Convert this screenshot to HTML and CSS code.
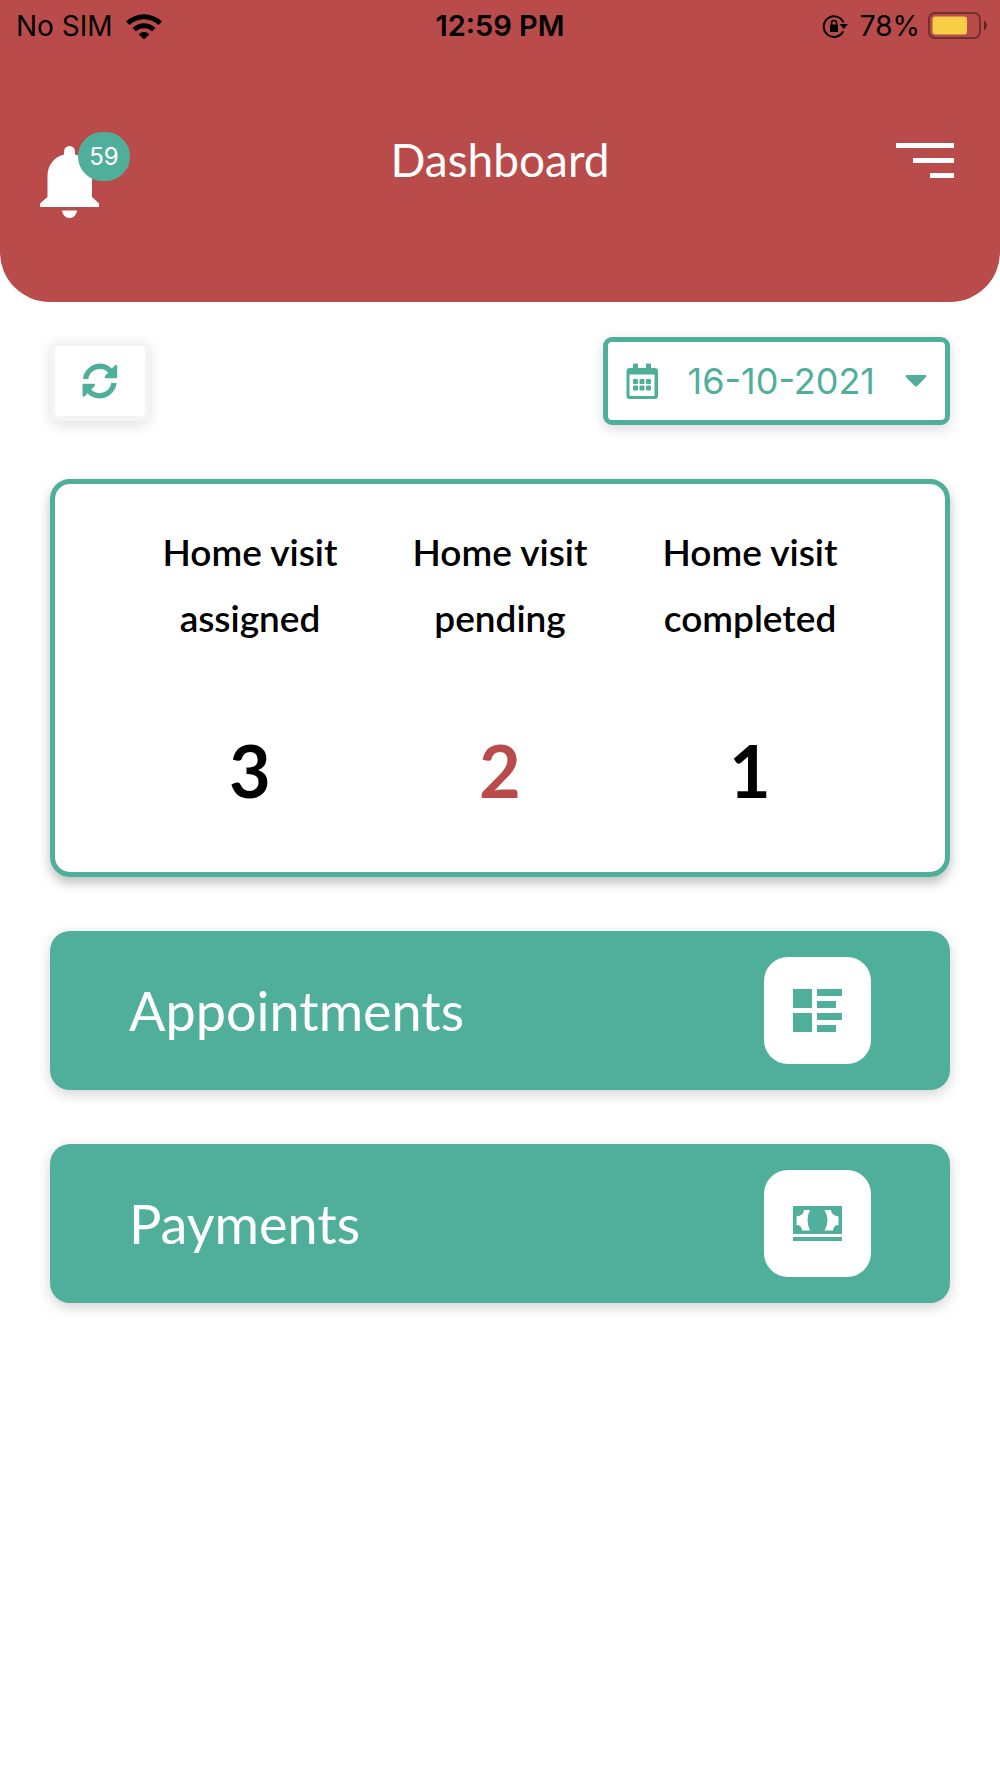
FILE: index.html
```html
<!DOCTYPE html>
<html lang="en">
<head>
  <meta charset="UTF-8">
  <meta name="viewport" content="width=device-width, initial-scale=1">
  <title>Dashboard</title>
  <link rel="stylesheet" href="styles.css">
</head>
<body>
  <header class="header">
    <div class="status">
      <div class="status-left">
        <span>No SIM</span>
        <svg class="wifi" viewBox="0 0 38 28" width="38" height="28">
          <path d="M1 9.500A26 26 0 0 1 37 9.500L33.500 13A21 21 0 0 0 4.500 13Z"/>
          <path d="M7.500 16A16.500 16.500 0 0 1 30.500 16L27 19.500A11.500 11.500 0 0 0 11 19.500Z"/>
          <path d="M13.500 22.200A8 8 0 0 1 24.500 22.200L19 27.500Z"/>
        </svg>
      </div>
      <span class="time">12:59 PM</span>
      <div class="status-right">
        <svg class="lock" viewBox="0 0 26 24" width="26" height="24">
          <path d="M21.200 17.300A10.300 10.300 0 1 1 21.500 8.500" fill="none" stroke="#000" stroke-width="2"/>
          <path d="M17.500 10h8.500l-4.200 5z"/>
          <rect x="8" y="10.500" width="8" height="7.500" rx="1"/>
          <path d="M9.500 11.500V9a2.500 2.500 0 0 1 5 0v2.500" fill="none" stroke="#000" stroke-width="1.500"/>
        </svg>
        <span>78%</span>
        <svg class="battery" viewBox="0 0 60 28" width="60" height="28">
          <rect x="1" y="1" width="51" height="25" rx="6" fill="none" stroke="#742f2f" stroke-width="2"/>
          <rect x="4.500" y="4.500" width="34.500" height="18" rx="3" fill="#f8ce46"/>
          <path d="M56 8.500q6 5 0 10z" fill="#5c2525"/>
        </svg>
      </div>
    </div>
    <nav class="nav">
      <button class="bell" aria-label="Notifications">
        <svg viewBox="0 0 60 74" width="60" height="74" fill="#fff">
          <path d="M29.500 0a5.500 5.500 0 0 1 5.500 5.500V8.500C46 11 52 20 52 30V51L59 57.500V61H0V57.500L7.500 51V30C7.500 20 13.500 11 24 8.500V5.500A5.500 5.500 0 0 1 29.500 0Z"/>
          <path d="M22 64.500H37A7.500 7.500 0 0 1 22 64.500Z"/>
        </svg>
        <span class="badge">59</span>
      </button>
      <h1>Dashboard</h1>
      <button class="menu" aria-label="Menu">
        <span></span>
        <span></span>
        <span></span>
      </button>
    </nav>
  </header>

  <main class="content">
    <div class="toolbar">
      <button class="refresh" aria-label="Refresh">
        <svg viewBox="0 0 36 36" width="36" height="36">
          <path d="M3.500 16A14.500 14.500 0 0 1 29 8.500" fill="none" stroke="#50af9b" stroke-width="5.500"/>
          <path d="M33 2.200Q35 1.500 35.200 3.500V14Q35.200 15.200 34 15.200H23.500Q22 14.500 23 13Z"/>
          <path d="M32 20A14.500 14.500 0 0 1 6.500 27.500" fill="none" stroke="#50af9b" stroke-width="5.500"/>
          <path d="M2.500 33.500Q.8 34 .5 32.500V22Q.5 20.800 1.500 20.800H12.500Q13.800 21.500 12.700 23Z"/>
        </svg>
      </button>
      <button class="date">
        <svg viewBox="0 0 32 36" width="32" height="36">
          <path fill-rule="evenodd" d="M7 5V1.500Q7 .5 8 .5h3q1 0 1 1V5h8V1.500q0-1 1-1h3q1 0 1 1V5h4q3 0 3 3v25q0 3-3 3H3.500q-3 0-3-3V8q0-3 3-3ZM3.500 11.500V32q0 1 1 1h23q1 0 1-1V11.500Z"/>
          <rect x="7" y="16" width="5" height="5" rx="1"/>
          <rect x="13.500" y="16" width="5" height="5" rx="1"/>
          <rect x="20" y="16" width="5" height="5" rx="1"/>
          <rect x="7" y="22.500" width="5" height="5" rx="1"/>
          <rect x="13.500" y="22.500" width="5" height="5" rx="1"/>
          <rect x="20" y="22.500" width="5" height="5" rx="1"/>
        </svg>
        <span>16-10-2021</span>
        <svg viewBox="0 0 22 12" width="22" height="12">
          <path d="M1.500 0h19q1.500.5.500 2L12 11.200q-1 .8-2 0L.8 2Q0 .5 1.500 0Z"/>
        </svg>
      </button>
    </div>

    <section class="stats">
      <div class="stat">
        <h2>Home visit<br>assigned</h2>
        <p>3</p>
      </div>
      <div class="stat pending">
        <h2>Home visit<br>pending</h2>
        <p>2</p>
      </div>
      <div class="stat">
        <h2>Home visit<br>completed</h2>
        <p>1</p>
      </div>
    </section>

    <a class="link" href="#appointments">
      <span>Appointments</span>
      <span class="tile">
        <svg viewBox="0 0 49 43" width="49" height="43">
          <path d="M0 0h19v19H0zM24 0h25v7H24zM24 12h19v7H24zM0 24h19v19H0zM24 24h25v7H24zM24 36h19v7H24z"/>
        </svg>
      </span>
    </a>
    <a class="link" href="#payments">
      <span>Payments</span>
      <span class="tile">
        <svg viewBox="0 0 49 35" width="49" height="35">
          <path d="M0 0h49v28H0zM0 31h49v4H0z"/>
          <path fill="#fff" d="M11 4h6q-5 10 0 20.500H9q0-3-2-4.500-1.500-1-3.500-1V10.500Q7 10 8.500 8.500 11 7 11 4ZM38 4h-6.500q6 10 0 20.500H40q0-3 2-4.500 1.500-1 3.500-1V10.500Q42 10 40.500 8.500 38 7 38 4Z"/>
        </svg>
      </span>
    </a>
  </main>
</body>
</html>
```
FILE: styles.css
```css
* {
  box-sizing: border-box;
}
body {
  margin: 0;
  background: #fff;
  font-family: Lato, sans-serif;
  color: #000;
}
button {
  padding: 0;
  border: 0;
  background: none;
  font: inherit;
  cursor: pointer;
}
svg {
  display: block;
  flex-shrink: 0;
}
h1, h2, p {
  margin: 0;
}
.header {
  padding-bottom: 82px;
  background: #b94b4a;
  border-radius: 0 0 50px 50px;
}
.status {
  display: grid;
  grid-template-columns: 1fr auto 1fr;
  align-items: center;
  padding: 9px 12px 7px;
  font-family: Inter, sans-serif;
  font-size: 28px;
  line-height: 34px;
}
.status-left,
.status-right {
  display: flex;
  align-items: center;
}
.status-left {
  gap: 12px;
  padding-left: 4px;
}
.status-right {
  justify-content: flex-end;
  gap: 8px;
}
.status-right .lock {
  margin-right: 4px;
}
.time {
  font-size: 29px;
  font-weight: 600;
}
.nav {
  display: grid;
  grid-template-columns: 1fr auto 1fr;
  padding: 82px 40px 0;
}
.bell {
  position: relative;
  justify-self: start;
  padding-top: 14px;
}
.badge {
  position: absolute;
  top: 0;
  left: 38px;
  width: 52px;
  border-radius: 26px;
  background: #50af9b;
  color: #fff;
  font-family: Inter, sans-serif;
  font-size: 24px;
  line-height: 49px;
}
h1 {
  color: #fff;
  font-size: 46px;
  font-weight: 400;
  line-height: 56px;
}
.menu {
  display: flex;
  flex-direction: column;
  align-items: flex-end;
  align-self: start;
  justify-self: end;
  gap: 10px;
  padding: 11px 6px 0 0;
}
.menu span {
  width: 58px;
  height: 5px;
  background: #fff;
}
.menu span:nth-child(2) {
  width: 41px;
}
.menu span:nth-child(3) {
  width: 24px;
}
.content {
  display: flex;
  flex-direction: column;
  gap: 54px;
  padding: 35px 50px 60px;
}
.toolbar {
  display: flex;
  align-items: center;
  justify-content: space-between;
}
.refresh {
  padding: 17px 27px;
  border: 5px solid #f4f4f4;
  border-radius: 9px;
  background: #fff;
  box-shadow: 0 4px 14px rgba(0, 0, 0, .12);
  fill: #50af9b;
}
.date {
  display: flex;
  align-items: center;
  gap: 30px;
  padding: 17px 18px;
  border: 5px solid #50af9b;
  border-radius: 9px;
  background: #fff;
  box-shadow: 0 4px 14px rgba(0, 0, 0, .15);
  color: #50af9b;
  fill: #50af9b;
  font-family: Inter, sans-serif;
  font-size: 36px;
  line-height: 44px;
}
.stats {
  display: grid;
  grid-template-columns: repeat(3, 1fr);
  padding: 35px 70px 58px;
  border: 5px solid #50af9b;
  border-radius: 20px;
  box-shadow: 0 6px 12px rgba(0, 0, 0, .25);
  text-align: center;
}
.stat h2 {
  font-size: 37px;
  font-weight: 600;
  line-height: 66px;
}
.stat p {
  margin-top: 75px;
  font-size: 72px;
  font-weight: 700;
  line-height: 88px;
}
.pending p {
  color: #b94b4a;
}
.link {
  display: flex;
  align-items: center;
  justify-content: space-between;
  padding: 26px 79px;
  border-radius: 20px;
  background: #50af9b;
  box-shadow: 0 4px 14px rgba(0, 0, 0, .18);
  color: #fff;
  font-size: 54px;
  text-decoration: none;
}
.tile {
  display: flex;
  align-items: center;
  justify-content: center;
  width: 107px;
  height: 107px;
  border-radius: 24px;
  background: #fff;
  fill: #50af9b;
}
```
